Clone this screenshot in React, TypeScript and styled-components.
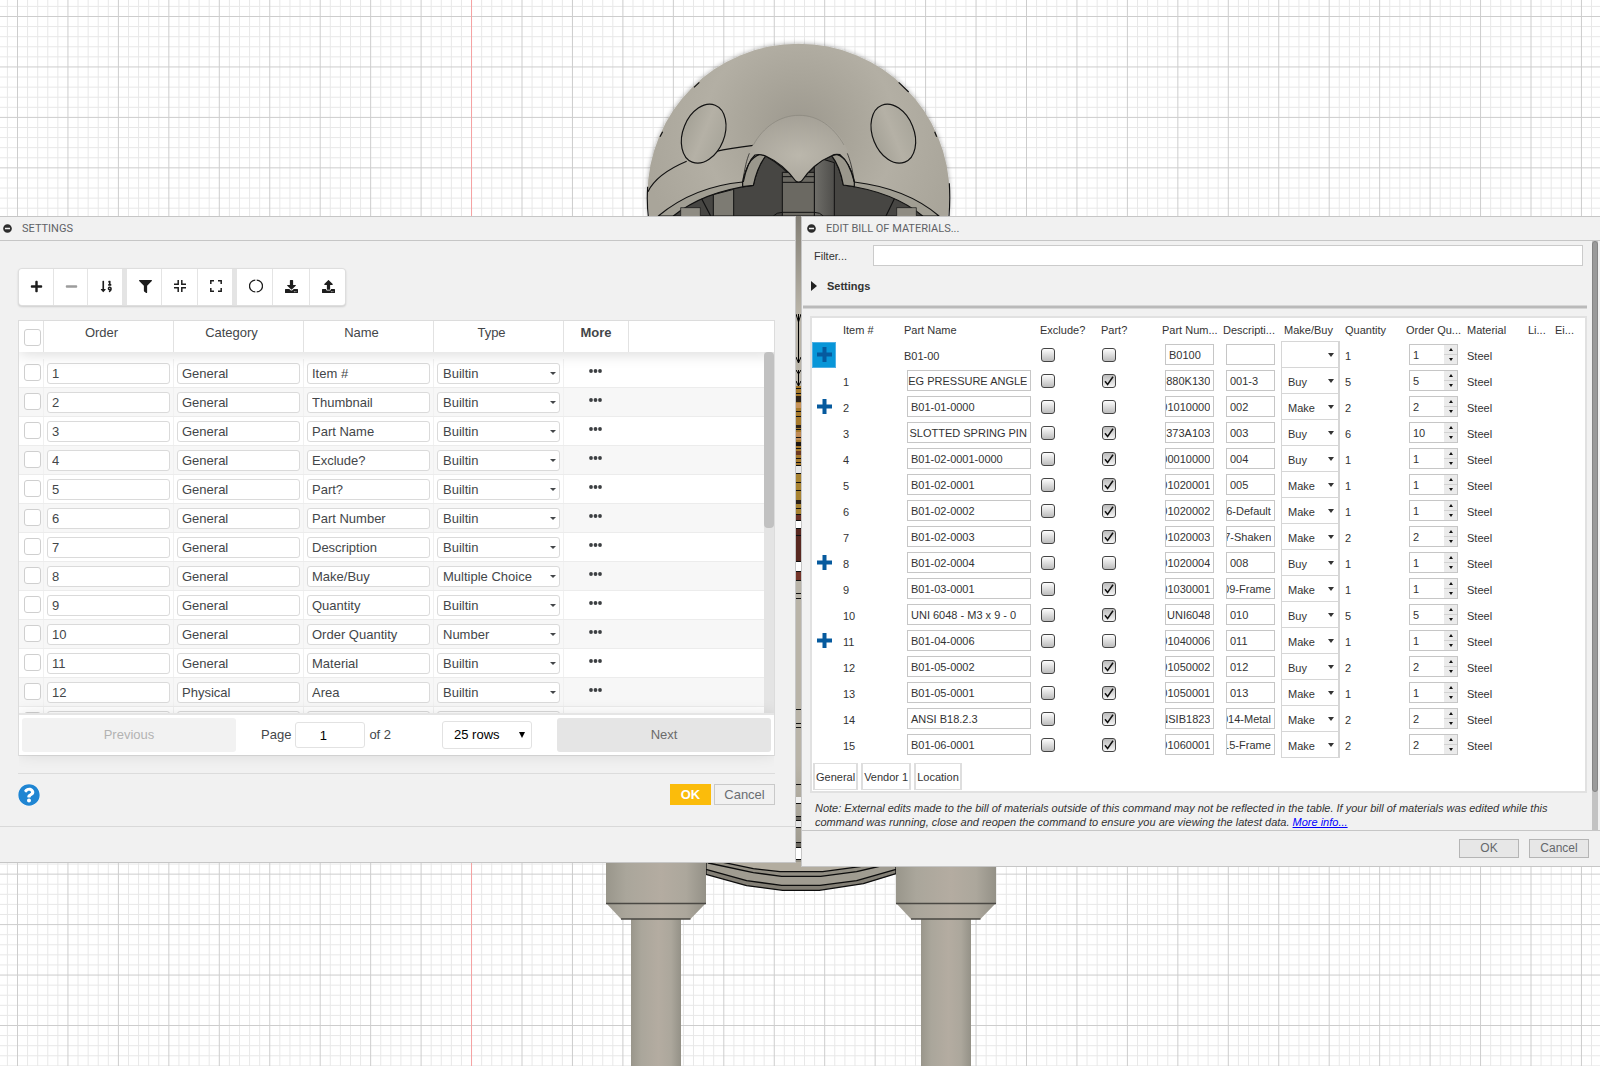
import React, { useEffect, useRef } from "react";
import styled, { createGlobalStyle, css } from "styled-components";
import {
  FaPlus,
  FaMinus,
  FaSortNumericDown,
  FaFilter,
  FaDownload,
  FaUpload,
  FaQuestionCircle,
  FaMinusCircle,
} from "react-icons/fa";

const GlobalStyle = createGlobalStyle`
  *, *::before, *::after { box-sizing: border-box; }
  html, body { height: 100%; }
  body {
    margin: 0;
    background: #fff;
    overflow: hidden;
    font-family: "Liberation Sans", Arial, sans-serif;
    color: #434649;
  }
  button, input, select { font: inherit; color: inherit; margin: 0; }
`;

/* ---------- shared window chrome ---------- */

const Desktop = styled.div`
  position: relative;
  min-height: 100vh;
`;

const Backdrop = styled.svg`
  position: absolute;
  inset: 0;
  width: 100%;
  height: 100vh;
`;

const Windows = styled.main`
  position: relative;
  display: grid;
  grid-template-columns: 796fr 799fr;
  gap: 5px;
  align-items: start;
  padding-top: 216px;
`;

const Panel = styled.section`
  min-width: 0;
  background: #f1f1f1;
  border: 1px solid #c6c6c6;
  ${(p: { $dock: "left" | "right" }) => `border-${p.$dock}-width: 0;`}
`;

const PanelHeader = styled.header`
  display: flex;
  align-items: center;
  height: 24px;
  padding-left: ${(p: { $inset: number }) => p.$inset}px;
  gap: 10px;
  border-bottom: 1px solid #c6c6c6;
`;

const PanelTitle = styled.h2`
  margin: 0;
  font: 400 11px/16px Roboto, "Liberation Sans", sans-serif;
  color: #5f6266;
`;

const CollapseButton = styled.button`
  display: flex;
  padding: 0;
  border: 0;
  background: none;
  color: #2c2c2c;
  font-size: 9px;
`;

/* ---------- settings panel ---------- */

const SettingsBody = styled.div`
  padding: 27px 20px 20px 18px;
  border-bottom: 1px solid #d9d9d9;
`;

const PanelFoot = styled.footer`
  height: 35px;
`;

const Toolbar = styled.div`
  display: inline-flex;
  gap: 5px;
  height: 38px;
  border: 1px solid #dedede;
  border-radius: 4px;
  background: #e4e4e4;
  box-shadow: 0 1px 2px rgba(0, 0, 0, 0.15);
  overflow: hidden;
  vertical-align: top;
`;

const ToolGroup = styled.div`
  display: flex;
  gap: 1px;
  width: ${(p: { $width: number }) => p.$width}px;
`;

const ToolButton = styled.button`
  flex: 1;
  display: flex;
  align-items: center;
  justify-content: center;
  padding: 0 0 2px 2px;
  border: 0;
  background: #fff;
  color: #1d1d1d;
  font-size: 13px;
  &:disabled { color: #9c9c9c; }
`;

const GridFrame = styled.div`
  position: relative;
  margin-top: 14px;
  border: 1px solid #dcdcdc;
  background: #fff;
  font-size: 13px;
  line-height: 16px;
`;

const SettingsTable = styled.table`
  display: block;
  border-collapse: collapse;
`;

const SettingsHead = styled.thead`
  display: block;
  position: relative;
  box-shadow: 0 2px 15px 0 rgba(0, 0, 0, 0.15);
  clip-path: inset(0 0 -20px 0);
`;

const SettingsRows = styled.tbody`
  display: block;
  height: 361px;
  padding-top: 7px;
  overflow: hidden;
`;

const settingsColumns = css`
  display: grid;
  grid-template-columns: 25px repeat(4, 130px) 65px 1fr;
`;

const SettingsHeadRow = styled.tr`
  ${settingsColumns}
  height: 31px;
`;

const SettingsRow = styled.tr`
  ${settingsColumns}
  height: 29px;
  border-bottom: 1px solid #ececec;
  &:nth-child(even) { background: #f7f7f7; }
`;

const SettingsHeading = styled.th`
  padding: 4px ${(p: { $sortable?: boolean }) => (p.$sortable ? 14 : 0)}px 0 0;
  border-right: 1px solid #e2e2e2;
  font-weight: ${(p: { $sortable?: boolean }) => (p.$sortable ? 400 : 700)};
  text-align: center;
  &:last-child { border-right: 0; }
`;

const TickHeading = styled.th`
  padding: 8px 0 0 5px;
  border-right: 1px solid #e2e2e2;
  text-align: left;
`;

const SettingsCell = styled.td`
  padding: 4px 3px 0;
  border-right: 1px solid #f1f1f1;
  text-align: left;
  &:nth-last-child(-n + 2) { border-right: 0; }
`;

const TickCell = styled(SettingsCell)`
  padding: 5px 0 0 5px;
`;

const MoreCell = styled(SettingsCell)`
  padding: 0 3px 0 0;
  text-align: center;
`;

const Tick = styled.input`
  display: block;
  appearance: none;
  width: 17px;
  height: 17px;
  border: 1px solid #cfcfcf;
  border-radius: 3px;
  background: #fff;
`;

const field = css`
  display: block;
  width: 100%;
  height: 21px;
  border: 1px solid #dadada;
  border-radius: 3px;
  background: #fff;
  padding: 0 4px;
`;

const FieldInput = styled.input`
  ${field}
`;

const SelectWrap = styled.span`
  position: relative;
  display: block;
`;

const FieldSelect = styled.select`
  ${field}
  appearance: none;
  padding: 1px 5px 0;
`;

const Caret = styled.span`
  position: absolute;
  right: ${(p: { $right: number; $drop: number }) => p.$right}px;
  top: 50%;
  margin-top: -2px;
  border: 3px solid transparent;
  border-top: ${(p) => p.$drop}px solid currentColor;
  border-bottom: 0;
  pointer-events: none;
`;

const MoreButton = styled.button`
  display: inline-flex;
  align-items: center;
  height: 24px;
  padding: 0 8px;
  border: 0;
  background: none;
`;

const ScrollTrack = styled.div`
  position: absolute;
  top: 31px;
  right: 0;
  width: 10px;
  height: 361px;
  background: #e4e4e4;
`;

const ScrollThumb = styled.div`
  height: 176px;
  border-radius: 4px;
  background: #c1c1c1;
`;

const Pager = styled.div`
  position: relative;
  display: grid;
  grid-template-columns: 214px 1fr 214px;
  height: 42px;
  padding: 3px;
  border-top: 2px solid #e5e5e5;
  background: #fff;
  box-shadow: 0 0 15px 0 rgba(0, 0, 0, 0.1);
  clip-path: inset(-20px 0 -20px 0);
`;

const PageButton = styled.button`
  height: 34px;
  border: 0;
  border-radius: 3px;
  background: #e5e5e5;
  color: #6b6b6b;
  &:disabled { background: #f2f2f2; color: #b2b2b2; }
`;

const PageInfo = styled.div`
  display: flex;
  align-items: center;
  justify-content: space-between;
  padding: 0 25px;
`;

const PageLabel = styled.label`
  display: flex;
  align-items: center;
  gap: 4px;
`;

const PageInput = styled.input`
  width: 70px;
  height: 26px;
  padding: 0 14px 0 0;
  border: 1px solid #e2e2e2;
  border-radius: 3px;
  color: #000;
  text-align: center;
`;

const PageSize = styled.select`
  appearance: none;
  width: 90px;
  height: 28px;
  padding: 0 11px;
  border: 1px solid #e2e2e2;
  border-radius: 3px;
  background: #fff;
  color: #000;
`;

const PageSizeMark = styled.span`
  position: absolute;
  right: 7px;
  top: 11px;
  border: 3px solid transparent;
  border-top: 6px solid #000;
  border-bottom: 0;
  pointer-events: none;
`;

const ActionRow = styled.div`
  display: flex;
  align-items: flex-start;
  gap: 3px;
  height: 33px;
  margin-top: 17px;
  padding-top: 10px;
  border-top: 1px solid #dcdcdc;
`;

const HelpButton = styled.button`
  display: flex;
  margin-right: auto;
  padding: 0;
  border: 0;
  border-radius: 50%;
  background: #fff;
  color: #1f85d2;
  font-size: 22px;
`;

const DialogButton = styled.button`
  width: 61px;
  height: 21px;
  padding: 0;
  border: 1px solid #c9c9c9;
  background: #f1f1f1;
  color: #6a6d71;
  font-size: 13px;
`;

const PrimaryButton = styled(DialogButton)`
  width: 41px;
  border: 0;
  background: #fbbc0b;
  color: #fff;
  font-weight: 700;
`;

/* ---------- bill of materials panel ---------- */

const BomBody = styled.div`
  display: flex;
  font-size: 11px;
  line-height: 14px;
  color: #333;
`;

const BomContent = styled.div`
  flex: 1;
  min-width: 0;
  padding: 4px 5px 1px 1px;
`;

const FilterRow = styled.div`
  display: grid;
  grid-template-columns: 59px 1fr;
  align-items: center;
  padding: 0 4px 0 11px;
`;

const FilterInput = styled.input`
  height: 21px;
  border: 1px solid #cbcbcb;
  background: #fff;
  padding: 0 3px;
`;

const Disclosure = styled.button`
  display: flex;
  align-items: center;
  gap: 10px;
  height: 39px;
  padding: 0 8px;
  border: 0;
  background: none;
  font-weight: 700;
`;

const Rule = styled.hr`
  height: 4px;
  margin: 0 0 7px;
  border: 1px solid #d6d6d6;
  border-width: 1px 0;
  background: #bababa;
`;

const BomCard = styled.div`
  margin-left: 7px;
  padding-bottom: 1px;
  border: 2px solid #e1e1e1;
  background: #fff;
`;

const BomTable = styled.table`
  display: block;
`;

const BomHead = styled.thead`
  display: block;
`;

const BomRows = styled.tbody`
  display: block;
`;

const BomRow = styled.tr`
  display: grid;
  grid-template-columns: 31px 61px 136px repeat(8, 61px) 27px 1fr;
  align-items: center;
  height: ${(p: { $heading?: boolean }) => (p.$heading ? 23 : 26)}px;
`;

const BomHeading = styled.th`
  padding: 0;
  font-weight: 400;
  text-align: left;
  white-space: nowrap;
`;

const BomCell = styled.td`
  padding: ${(p: { $text?: boolean }) => (p.$text ? "2px 0 0" : "0")};
`;

const BoxCell = styled.td`
  padding: 0 9px 0 3px;
`;

const ChoiceCell = styled.td`
  padding: 0;
  margin-left: -3px;
  width: 59px;
`;

const bomField = css`
  display: block;
  width: 100%;
  height: 21px;
  border: 1px solid #c6c6c6;
  background: #fff;
`;

const BomInput = styled.input`
  ${bomField}
  padding: 0 3px 0 0;
  text-indent: 3px;
`;

const BomSelect = styled.select`
  appearance: none;
  display: block;
  width: 59px;
  height: 27px;
  border: 1px solid #d6d6d6;
  border-right-width: 2px;
  background: #fff;
  padding: 2px 6px 0;
`;

const ExpandButton = styled.button`
  display: flex;
  align-items: center;
  justify-content: center;
  width: 24px;
  height: 26px;
  padding: 0;
  border: 1px solid ${(p: { $active?: boolean }) => (p.$active ? "#4fb0e4" : "transparent")};
  background: ${(p: { $active?: boolean }) => (p.$active ? "#0896d8" : "none")};
`;

const TickBox = styled.span`
  display: inline-grid;
  vertical-align: middle;
  margin-left: 1px;
  > * { grid-area: 1 / 1; }
`;

const BomTick = styled.input`
  appearance: none;
  width: 14px;
  height: 14px;
  border: 1px solid #444;
  border-radius: 3px;
  background: linear-gradient(#fdfdfd, #bcbcbc);
  &:checked { background: linear-gradient(#bcbcbc, #f4f4f4); }
`;

const TickMark = styled.svg`
  width: 14px;
  height: 14px;
  pointer-events: none;
`;

const SpinBox = styled.span`
  ${bomField}
  display: flex;
`;

const SpinInput = styled.input`
  flex: 1;
  min-width: 0;
  padding: 0 0 0 3px;
  border: 0;
  appearance: textfield;
  &::-webkit-inner-spin-button { appearance: none; }
`;

const SpinButtons = styled.span`
  display: grid;
  grid-template-rows: 1fr 1fr;
  gap: 1px;
  width: 13px;
  background: #d2d2d2;
`;

const SpinButton = styled.button`
  display: flex;
  align-items: center;
  justify-content: center;
  padding: 0;
  border: 0;
  background: #ebebeb;
  color: #111;
`;

const Tabs = styled.div`
  display: flex;
  gap: 3px;
  margin: 6px 0 0 1px;
`;

const Tab = styled.button`
  height: 27px;
  padding: 0 1px;
  border: 1px solid #dedede;
  border-width: 1px 2px;
  background: #fff;
`;

const Note = styled.p`
  margin: 8px 0 0;
  padding: 0 16px 0 12px;
  font-size: 11px;
  font-style: italic;
`;

const NoteLink = styled.a`
  color: #00f;
`;

const PanelTrack = styled.div`
  width: 6px;
  margin-right: 2px;
  background: #c3c3c3;
`;

const PanelThumb = styled.div`
  height: 551px;
  border: 1px solid #858585;
  border-radius: 3px;
  background: #9a9a9a;
`;

const BomFoot = styled.footer`
  display: flex;
  justify-content: flex-end;
  gap: 10px;
  height: 36px;
  padding: 8px 11px;
  border-top: 1px solid #c6c6c6;
`;

const FootButton = styled.button`
  width: 60px;
  height: 19px;
  padding: 0;
  border: 1px solid #b5b5b5;
  background: #e7e7e7;
  color: #65686c;
  font-size: 12px;
  line-height: 17px;
`;

/* ---------- data ---------- */

const settings: [string, string, string][] = [
  ["General", "Item #", "Builtin"],
  ["General", "Thumbnail", "Builtin"],
  ["General", "Part Name", "Builtin"],
  ["General", "Exclude?", "Builtin"],
  ["General", "Part?", "Builtin"],
  ["General", "Part Number", "Builtin"],
  ["General", "Description", "Builtin"],
  ["General", "Make/Buy", "Multiple Choice"],
  ["General", "Quantity", "Builtin"],
  ["General", "Order Quantity", "Number"],
  ["General", "Material", "Builtin"],
  ["Physical", "Area", "Builtin"],
  ["Physical", "Density", "Builtin"],
];

type Part = {
  name: string;
  part: boolean;
  number: string;
  description: string;
  source: string;
  quantity: number;
  order: number;
  group?: boolean;
};

const parts: Part[] = [
  { name: "B01-00", part: false, number: "B0100", description: "", source: "", quantity: 1, order: 1, group: true },
  { name: "20 DEG PRESSURE ANGLE", part: true, number: "57880K130", description: "001-3", source: "Buy", quantity: 5, order: 5 },
  { name: "B01-01-0000", part: false, number: "B01010000", description: "002", source: "Make", quantity: 2, order: 2, group: true },
  { name: "STEEL SLOTTED SPRING PIN", part: true, number: "92373A103", description: "003", source: "Buy", quantity: 6, order: 10 },
  { name: "B01-02-0001-0000", part: true, number: "B00010000", description: "004", source: "Buy", quantity: 1, order: 1 },
  { name: "B01-02-0001", part: true, number: "B01020001", description: "005", source: "Make", quantity: 1, order: 1 },
  { name: "B01-02-0002", part: true, number: "B01020002", description: "006-Default", source: "Make", quantity: 1, order: 1 },
  { name: "B01-02-0003", part: true, number: "B01020003", description: "007-Shaken", source: "Make", quantity: 2, order: 2 },
  { name: "B01-02-0004", part: false, number: "B01020004", description: "008", source: "Buy", quantity: 1, order: 1, group: true },
  { name: "B01-03-0001", part: true, number: "B01030001", description: "009-Frame", source: "Make", quantity: 1, order: 1 },
  { name: "UNI 6048 - M3 x 9 - 0", part: true, number: "UNI6048", description: "010", source: "Buy", quantity: 5, order: 5 },
  { name: "B01-04-0006", part: false, number: "B01040006", description: "011", source: "Make", quantity: 1, order: 1, group: true },
  { name: "B01-05-0002", part: true, number: "B01050002", description: "012", source: "Buy", quantity: 2, order: 2 },
  { name: "B01-05-0001", part: true, number: "B01050001", description: "013", source: "Make", quantity: 1, order: 1 },
  { name: "ANSI B18.2.3", part: true, number: "ANSIB1823", description: "014-Metal", source: "Make", quantity: 2, order: 2 },
  { name: "B01-06-0001", part: true, number: "B01060001", description: "015-Frame", source: "Make", quantity: 2, order: 2 },
];

const bomHeadings = [
  "", "Item #", "Part Name", "Exclude?", "Part?", "Part Num...", "Descripti...",
  "Make/Buy", "Quantity", "Order Qu...", "Material", "Li...", "Ei...",
];

/* ---------- small parts ---------- */

function LoopIcon() {
  return (
    <svg width="14" height="14" viewBox="0 0 14 14" fill="none" stroke="currentColor" strokeWidth="1.3" aria-hidden="true">
      <path d="M7.7 1.2A5.8 5.8 0 0 1 7.7 12.8M6.3 1.2A5.8 5.8 0 0 0 6.3 12.8" />
    </svg>
  );
}

function CompressIcon() {
  return (
    <svg width="12" height="12" viewBox="0 0 12 12" fill="none" stroke="currentColor" strokeWidth="1.5" aria-hidden="true">
      <path d="M4.2 0V4.200H0M7.800 0V4.200H12M4.200 12V7.800H0M7.800 12V7.800H12" />
    </svg>
  );
}

function ExpandIcon() {
  return (
    <svg width="12" height="12" viewBox="0 0 12 12" fill="none" stroke="currentColor" strokeWidth="1.5" aria-hidden="true">
      <path d="M.8 4V.8H4M8 .8H11.200V4M11.200 8V11.200H8M4 11.200H.8V8" />
    </svg>
  );
}

function DotsIcon() {
  return (
    <svg width="13" height="4" viewBox="0 0 13 4" fill="#3c3f42" aria-hidden="true">
      <circle cx="2" cy="2" r="1.9" />
      <circle cx="6.5" cy="2" r="1.9" />
      <circle cx="11" cy="2" r="1.9" />
    </svg>
  );
}

function PlusIcon() {
  return (
    <svg width="15" height="15" viewBox="0 0 15 15" fill="#065a9e" aria-hidden="true">
      <path d="M5.5 0h4v5.5H15v4H9.5V15h-4V9.5H0v-4h5.5z" />
    </svg>
  );
}

/* Shows the tail of its value when the text is wider than the box. */
function TailInput(props: { label: string; value: string }) {
  const ref = useRef<HTMLInputElement>(null);
  useEffect(() => {
    if (ref.current) ref.current.scrollLeft = ref.current.scrollWidth;
  }, []);
  return <BomInput ref={ref} aria-label={props.label} defaultValue={props.value} />;
}

function BomCheck(props: { label: string; checked: boolean }) {
  return (
    <TickBox>
      <BomTick type="checkbox" aria-label={props.label} defaultChecked={props.checked} />
      {props.checked && (
        <TickMark viewBox="0 0 14 14" fill="none" stroke="#111" strokeWidth="1.5" aria-hidden="true">
          <path d="M3 7.2 5.6 10.4 11 2.8" />
        </TickMark>
      )}
    </TickBox>
  );
}

function Spinner(props: { label: string; value: number }) {
  const ref = useRef<HTMLInputElement>(null);
  return (
    <SpinBox>
      <SpinInput ref={ref} type="number" aria-label={props.label} defaultValue={props.value} />
      <SpinButtons>
        <SpinButton aria-label="Increase" onClick={() => ref.current?.stepUp()}>
          <svg width="4" height="3" viewBox="0 0 4 3" fill="currentColor"><path d="M0 3 2 0 4 3z" /></svg>
        </SpinButton>
        <SpinButton aria-label="Decrease" onClick={() => ref.current?.stepDown()}>
          <svg width="4" height="3" viewBox="0 0 4 3" fill="currentColor"><path d="M0 0 2 3 4 0z" /></svg>
        </SpinButton>
      </SpinButtons>
    </SpinBox>
  );
}

/* ---------- canvas drawing ---------- */

function gridLines(start: number, step: number, end: number, major: boolean) {
  const out: number[] = [];
  for (let i = 0, at = start; at < end; i += 1, at = start + i * step) {
    if (major || i % 5 !== 0) out.push(at);
  }
  return out;
}

const PITCH = 50.45;
const rows = (major: boolean) => gridLines(16.5 - PITCH, major ? PITCH : PITCH / 5, 1066, major);
const cols = (major: boolean) => gridLines(17.5 - PITCH, major ? PITCH : PITCH / 5, 1600, major);

function GridPaper() {
  const path = (major: boolean) =>
    rows(major).map((y) => `M0 ${y}H1600`).join("") + cols(major).map((x) => `M${x} 0V1066`).join("");
  return (
    <g fill="none">
      <path d={path(false)} stroke="#e8e8e8" />
      <path d={path(true)} stroke="#cdcdcd" />
      <path d="M471.5 0V1066" stroke="#f5a3a3" />
    </g>
  );
}

function Leg(props: { x: number }) {
  return (
    <g transform={`translate(${props.x} 840)`}>
      <rect x="0" y="0" width="100" height="63" fill="url(#leg)" />
      <path d="M0 63H100L84.500 79H15z" fill="url(#leg)" />
      <rect x="25" y="79" width="50" height="147" fill="url(#leg)" />
      <path d="M0 63.500H100M15 79H84.500" stroke="#4a4843" strokeWidth="1.5" />
    </g>
  );
}

function Head() {
  return (
    <g transform="translate(620 20) scale(0.33333)" stroke="#111" strokeWidth="3.500" strokeLinejoin="round">
      <circle cx="535.500" cy="524" r="453" fill="url(#skull)" stroke="none" filter="url(#halo)" />
      <path d="M85 588Q80 550 83 500M987 588Q991 540 988 490M120 350L128 335M222 202L238 187M836 187L866 216M944 335L950 350" fill="none" />
      <path d="M84 515Q110 462 200 424M285 395Q330 384 400 376" fill="none" />
      <path d="M115 588Q220 500 368 486V500L400 496L670 495L703 486Q860 505 957 588z" fill="#a19e93" />
      <path d="M160 588Q250 515 400 496Q412 440 437 408Q490 438 527 485H545Q580 428 635 407Q660 440 670 495Q820 515 908 588z" fill="#474643" />
      <path d="M280 588V524L341 508V588z" fill="#7d7b73" strokeWidth="3" />
      <path d="M245 536L272 588M823 536L798 588" fill="none" />
      <path d="M182 588V563H241V588M830 588V563H889V588" fill="#8f8c83" strokeWidth="2" />
      <path d="M583 588V440L610 418L643 428V588z" fill="url(#post)" strokeWidth="3" />
      <path d="M487 588V457H583V588z" fill="#6b6962" strokeWidth="3" />
      <path d="M487 470H583M487 487H583M460 588Q470 577 487 577H583Q600 577 610 588" fill="none" strokeWidth="3" />
      <path d="M368 500V486Q380 415 420 403L437 408Q412 440 400 496z" fill="#9a978c" />
      <path d="M703 500V486Q690 415 650 403L635 407Q660 440 670 495z" fill="#9a978c" />
      <path
        d="M370 470C385 350 455 286 537 286C620 286 690 350 702 470Q688 425 660 404Q645 401 635 407Q580 430 545 483Q536 489 527 483Q490 432 437 408Q420 401 405 405Q382 425 370 470z"
        fill="url(#beak)"
        stroke="none"
      />
      <path d="M370 486Q382 425 405 405Q420 401 437 408Q490 432 527 483Q536 489 545 483Q580 430 635 407Q645 401 660 404Q688 425 703 486" fill="none" />
      <path d="M368 486C375 440 380 420 388 400M703 486C696 440 690 420 682 400" fill="none" strokeWidth="2" />
      <path d="M400 375C430 320 480 286 537 286C595 286 640 320 672 375" fill="none" stroke="#86837a" strokeWidth="2" />
      <ellipse cx="251" cy="341" rx="62" ry="92" transform="rotate(22 251 341)" fill="url(#eye)" />
      <ellipse cx="820" cy="341" rx="62" ry="92" transform="rotate(-22 820 341)" fill="url(#eye)" />
    </g>
  );
}

function Bowl() {
  return (
    <g transform="translate(580 840) scale(0.33333)" stroke="#0c0c0c" strokeWidth="4" strokeLinejoin="round">
      <path d="M378 0V103L500 137L608 151H718L850 131L948 101V0z" fill="#837f75" />
      <path d="M378 0V88L500 122L605 136H720L830 122L948 88V0z" fill="#a09c91" />
      <path d="M385 69L520 98L605 109H722L830 95L915 75V0H385z" fill="#918d82" />
      <path d="M430 67L520 86L600 95H728L840 80L880 60V0H430z" fill="#b3ada0" />
    </g>
  );
}

/* Bands of the body seen in the slot between the two windows. */
const bands: [number, number, string][] = [
  [386, 79, "#a77a2c"], [396, 6, "#2b2118"], [403, 5, "#c7935a"], [425, 3, "#2b2118"],
  [432, 8, "#c08b55"], [442, 4, "#1d1712"], [451, 4, "#6d3a22"], [465, 8, "#e8e8e8"],
  [473, 41, "#a88331"], [500, 4, "#2b2118"], [514, 6, "#6b3026"], [520, 8, "#fff"],
  [528, 33, "#582820"], [561, 10, "#fff"], [571, 9, "#74352a"], [797, 6, "#f0f0f0"],
  [816, 4, "#6a675f"], [821, 6, "#e4e4e4"], [842, 5, "#6a675f"], [848, 11, "#fff"],
];
const seams = [
  388, 393, 411, 416, 429, 437, 448, 458, 462, 465, 473, 482, 490, 508, 514, 520, 528,
  535, 561, 571, 580, 593, 598, 709, 723, 727, 784, 803, 816, 820, 827, 842, 847, 859,
];

function Body() {
  return (
    <g>
      <rect x="790" y="216" width="18" height="646" fill="url(#torso)" />
      {bands.map(([y, h, fill]) => (
        <rect key={y} x="790" y={y} width="18" height={h} fill={fill} />
      ))}
      <path d={seams.map((y) => `M790 ${y + 0.5}H808`).join("")} stroke="#111" />
      <path d="M798.500 314V363M796 314L798.500 322L801 314M796 357L798.500 363L801 357M798.500 370V386M796 370L798.500 374L801 370M796 381L798.500 386L801 381" fill="none" stroke="#000" />
    </g>
  );
}

function CanvasView() {
  return (
    <Backdrop viewBox="0 0 1600 1066" preserveAspectRatio="xMidYMin slice" aria-hidden="true">
      <defs>
        <radialGradient id="skull" gradientUnits="userSpaceOnUse" cx="540" cy="330" r="480">
          <stop offset="0" stopColor="#9c988e" />
          <stop offset="0.3" stopColor="#a8a499" />
          <stop offset="0.6" stopColor="#b3afa4" />
          <stop offset="1" stopColor="#a9a59a" />
        </radialGradient>
        <radialGradient id="beak" cx="0.5" cy="0.6" r="0.6">
          <stop offset="0" stopColor="#bbb7ac" />
          <stop offset="1" stopColor="#a5a197" />
        </radialGradient>
        <linearGradient id="eye">
          <stop offset="0" stopColor="#a5a297" />
          <stop offset="0.5" stopColor="#b5b1a6" />
          <stop offset="1" stopColor="#a9a69b" />
        </linearGradient>
        <linearGradient id="post">
          <stop offset="0" stopColor="#6f6e69" />
          <stop offset="1" stopColor="#4f4e4b" />
        </linearGradient>
        <linearGradient id="leg">
          <stop offset="0" stopColor="#99968b" />
          <stop offset="0.2" stopColor="#aaa69b" />
          <stop offset="0.55" stopColor="#b4aca1" />
          <stop offset="0.8" stopColor="#aca79c" />
          <stop offset="1" stopColor="#949187" />
        </linearGradient>
        <linearGradient id="torso" x2="0" y2="1">
          <stop offset="0" stopColor="#827e75" />
          <stop offset="0.15" stopColor="#b9b4a8" />
          <stop offset="0.85" stopColor="#b9b4a8" />
          <stop offset="1" stopColor="#99958a" />
        </linearGradient>
        <filter id="halo" x="-10%" y="-10%" width="120%" height="120%">
          <feDropShadow dx="0" dy="0" stdDeviation="8" floodColor="#000" floodOpacity="0.35" />
        </filter>
      </defs>
      <GridPaper />
      <Bowl />
      <Leg x={606} />
      <Leg x={896} />
      <Head />
      <Body />
    </Backdrop>
  );
}

/* ---------- panels ---------- */

function SettingsPanel() {
  return (
    <Panel $dock="left">
      <PanelHeader $inset={3}>
        <CollapseButton aria-label="Collapse settings"><FaMinusCircle /></CollapseButton>
        <PanelTitle>SETTINGS</PanelTitle>
      </PanelHeader>
      <SettingsBody>
        <Toolbar>
          <ToolGroup $width={103}>
            <ToolButton aria-label="Add"><FaPlus /></ToolButton>
            <ToolButton aria-label="Remove" disabled><FaMinus /></ToolButton>
            <ToolButton aria-label="Sort"><FaSortNumericDown /></ToolButton>
          </ToolGroup>
          <ToolGroup $width={105}>
            <ToolButton aria-label="Filter"><FaFilter /></ToolButton>
            <ToolButton aria-label="Compress"><CompressIcon /></ToolButton>
            <ToolButton aria-label="Expand"><ExpandIcon /></ToolButton>
          </ToolGroup>
          <ToolGroup $width={108}>
            <ToolButton aria-label="Reset"><LoopIcon /></ToolButton>
            <ToolButton aria-label="Download"><FaDownload /></ToolButton>
            <ToolButton aria-label="Upload"><FaUpload /></ToolButton>
          </ToolGroup>
        </Toolbar>

        <GridFrame>
          <SettingsTable>
            <SettingsHead>
              <SettingsHeadRow>
                <TickHeading><Tick type="checkbox" aria-label="Select all" /></TickHeading>
                <SettingsHeading $sortable>Order</SettingsHeading>
                <SettingsHeading $sortable>Category</SettingsHeading>
                <SettingsHeading $sortable>Name</SettingsHeading>
                <SettingsHeading $sortable>Type</SettingsHeading>
                <SettingsHeading>More</SettingsHeading>
                <SettingsHeading />
              </SettingsHeadRow>
            </SettingsHead>
            <SettingsRows>
              {settings.map(([category, name, type], i) => (
                <SettingsRow key={name}>
                  <TickCell><Tick type="checkbox" aria-label={`Select ${name}`} /></TickCell>
                  <SettingsCell><FieldInput aria-label="Order" defaultValue={i + 1} /></SettingsCell>
                  <SettingsCell><FieldInput aria-label="Category" defaultValue={category} /></SettingsCell>
                  <SettingsCell><FieldInput aria-label="Name" defaultValue={name} /></SettingsCell>
                  <SettingsCell>
                    <SelectWrap>
                      <FieldSelect aria-label="Type" defaultValue={type}><option>{type}</option></FieldSelect>
                      <Caret $right={4} $drop={3} />
                    </SelectWrap>
                  </SettingsCell>
                  <MoreCell><MoreButton aria-label={`More for ${name}`}><DotsIcon /></MoreButton></MoreCell>
                  <SettingsCell />
                </SettingsRow>
              ))}
            </SettingsRows>
          </SettingsTable>
          <ScrollTrack><ScrollThumb /></ScrollTrack>
          <Pager>
            <PageButton disabled>Previous</PageButton>
            <PageInfo>
              <PageLabel>
                Page <PageInput defaultValue="1" /> of 2
              </PageLabel>
              <SelectWrap>
                <PageSize aria-label="Rows per page"><option>25 rows</option></PageSize>
                <PageSizeMark />
              </SelectWrap>
            </PageInfo>
            <PageButton>Next</PageButton>
          </Pager>
        </GridFrame>

        <ActionRow>
          <HelpButton aria-label="Help"><FaQuestionCircle /></HelpButton>
          <PrimaryButton>OK</PrimaryButton>
          <DialogButton>Cancel</DialogButton>
        </ActionRow>
      </SettingsBody>
      <PanelFoot />
    </Panel>
  );
}

function BomPanel() {
  return (
    <Panel $dock="right">
      <PanelHeader $inset={5}>
        <CollapseButton aria-label="Collapse bill of materials"><FaMinusCircle /></CollapseButton>
        <PanelTitle>EDIT BILL OF MATERIALS...</PanelTitle>
      </PanelHeader>
      <BomBody>
        <BomContent>
          <FilterRow>
            <label htmlFor="filter">Filter...</label>
            <FilterInput id="filter" />
          </FilterRow>
          <Disclosure>
            <svg width="6" height="10" viewBox="0 0 6 10" fill="#222" aria-hidden="true"><path d="M0 0 6 5 0 10z" /></svg>
            Settings
          </Disclosure>
          <Rule />
          <BomCard>
            <BomTable>
              <BomHead>
                <BomRow $heading>
                  {bomHeadings.map((text) => <BomHeading key={text}>{text}</BomHeading>)}
                </BomRow>
              </BomHead>
              <BomRows>
                {parts.map((p, i) => (
                  <BomRow key={p.name}>
                    <BomCell>
                      {p.group && <ExpandButton $active={i === 0} aria-label={`Expand ${p.name}`}><PlusIcon /></ExpandButton>}
                    </BomCell>
                    <BomCell $text>{i > 0 ? i : ""}</BomCell>
                    {i === 0 ? <BomCell $text>{p.name}</BomCell> : <BoxCell><TailInput label="Part name" value={p.name} /></BoxCell>}
                    <BomCell><BomCheck label="Exclude" checked={false} /></BomCell>
                    <BomCell><BomCheck label="Part" checked={p.part} /></BomCell>
                    <BoxCell><TailInput label="Part number" value={p.number} /></BoxCell>
                    <BoxCell><TailInput label="Description" value={p.description} /></BoxCell>
                    <ChoiceCell>
                      <SelectWrap>
                        <BomSelect aria-label="Make or buy" defaultValue={p.source}><option>{p.source}</option></BomSelect>
                        <Caret $right={6} $drop={4} />
                      </SelectWrap>
                    </ChoiceCell>
                    <BomCell $text>{p.quantity}</BomCell>
                    <BoxCell><Spinner label="Order quantity" value={p.order} /></BoxCell>
                    <BomCell $text>Steel</BomCell>
                  </BomRow>
                ))}
              </BomRows>
            </BomTable>
            <Tabs>
              <Tab>General</Tab>
              <Tab>Vendor 1</Tab>
              <Tab>Location</Tab>
            </Tabs>
          </BomCard>
          <Note>
            Note: External edits made to the bill of materials outside of this command may not be reflected in the
            table. If your bill of materials was edited while this command was running, close and reopen the command
            to ensure you are viewing the latest data. <NoteLink href="#more">More info...</NoteLink>
          </Note>
        </BomContent>
        <PanelTrack><PanelThumb /></PanelTrack>
      </BomBody>
      <BomFoot>
        <FootButton>OK</FootButton>
        <FootButton>Cancel</FootButton>
      </BomFoot>
    </Panel>
  );
}

export default function App() {
  return (
    <>
      <GlobalStyle />
      <Desktop>
        <CanvasView />
        <Windows>
          <SettingsPanel />
          <BomPanel />
        </Windows>
      </Desktop>
    </>
  );
}
